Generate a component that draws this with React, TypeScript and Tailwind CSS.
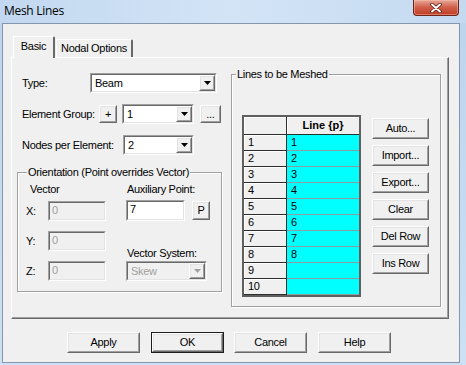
import React from "react";

const sunkenOuter = "border border-t-[#a0a0a0] border-l-[#a0a0a0] border-b-white border-r-white";
const sunkenInner = "border border-t-[#696969] border-l-[#696969] border-b-[#e3e3e3] border-r-[#e3e3e3]";
const raisedOuter = "border border-t-white border-l-white border-b-[#696969] border-r-[#696969]";
const raisedInner = "border border-t-[#e3e3e3] border-l-[#e3e3e3] border-b-[#a0a0a0] border-r-[#a0a0a0]";
const etched = "border border-[#a0a0a0] shadow-[1px_1px_0_#fff,inset_1px_1px_0_#fff]";

function Btn({ className, children, isDefault }: { className: string; children?: React.ReactNode; isDefault?: boolean }) {
  return (
    <div className={`${className} ${isDefault ? "border border-[#1c1c1c]" : ""} shrink-0`}>
      <div className={`${raisedOuter} h-full w-full`}>
        <div className={`${raisedInner} h-full w-full flex items-center justify-center bg-[#f0f0f0] leading-[13px]`}>
          {children}
        </div>
      </div>
    </div>
  );
}

function Arrow({ disabled }: { disabled?: boolean }) {
  return (
    <div className={`${raisedOuter} w-[16px] h-full shrink-0`}>
      <div className={`${raisedInner} h-full flex items-center justify-center bg-[#f0f0f0]`}>
        <svg width="7" height="4" viewBox="0 0 7 4">
          <path d="M0 0h7L3.5 4z" fill={disabled ? "#a0a0a0" : "#000"} />
        </svg>
      </div>
    </div>
  );
}

function Combo({ className, value, disabled }: { className: string; value: string; disabled?: boolean }) {
  return (
    <div className={`${sunkenOuter} ${className} shrink-0`}>
      <div className={`${sunkenInner} h-full flex ${disabled ? "bg-[#f0f0f0]" : "bg-white"}`}>
        <div className={`flex-1 pl-[3px] flex items-center leading-[14px] ${disabled ? "text-[#a0a0a0]" : ""}`}>{value}</div>
        <Arrow disabled={disabled} />
      </div>
    </div>
  );
}

function Edit({ className, value, disabled }: { className: string; value: string; disabled?: boolean }) {
  return (
    <div className={`${sunkenOuter} ${className} shrink-0`}>
      <div className={`${sunkenInner} h-full pl-[2px] pt-[1px] leading-[13px] ${disabled ? "bg-[#f0f0f0] text-[#a0a0a0]" : "bg-white"}`}>
        {value}
      </div>
    </div>
  );
}

export default function App() {
  const rows = [1, 2, 3, 4, 5, 6, 7, 8, 9, 10];
  return (
    <div className="w-[466px] h-[365px] flex flex-col overflow-hidden bg-gradient-to-b from-[#bcd4ed] to-[#cde0f4] font-['Liberation_Sans',Arial,sans-serif] text-[11px] tracking-[-0.3px] text-black">
      {/* Title bar */}
      <div className="h-[23px] flex items-start shrink-0 bg-gradient-to-r from-[#c2d8f0] via-[#d3e4f6] to-[#c4daf1]">
        <span className="ml-[4px] mt-[3px] font-['Open_Sans',sans-serif] text-[12px] leading-[16px] tracking-[-0.3px]">Mesh Lines</span>
        <div className="ml-auto mr-[7px] w-[46px] h-[16px] rounded-b-[4px] border border-t-0 border-[#6e2418] bg-gradient-to-b from-[#e7a798] via-[#cf5d48] to-[#c13c24] flex items-center justify-center shadow-[inset_0_0_0_1px_rgba(255,200,180,0.45)]">
          <svg width="12" height="10" viewBox="0 0 12 10">
            <path d="M2 1.5l8 7M10 1.5l-8 7" stroke="#5a1a10" strokeWidth="3.6" strokeLinecap="round" />
            <path d="M2 1.5l8 7M10 1.5l-8 7" stroke="#fff" strokeWidth="2" strokeLinecap="round" />
          </svg>
        </div>
      </div>

      {/* Client */}
      <div className="ml-[2px] mr-[6px] mb-[2px] flex-1 border border-[#8497ad] bg-[#f0f0f0] flex flex-col">
        {/* Tabs */}
        <div className="ml-[10px] mt-[12px] h-[21px] flex items-end shrink-0">
          <div className="relative z-10 -mb-[1px] w-[42px] h-[22px] bg-[#f0f0f0] border-l border-t border-white border-r-2 border-r-[#696969] rounded-tr-[2px] flex items-start justify-center pt-[3px] leading-[13px]">
            Basic
          </div>
          <div className="ml-[1px] w-[77px] h-[18px] border-l border-t border-white border-r-2 border-r-[#696969] rounded-tr-[2px] flex items-start justify-center pt-[2px] leading-[13px]">
            Nodal Options
          </div>
        </div>

        {/* Tab page */}
        <div className="ml-[8px] w-[438px] h-[262px] shrink-0 border-t border-l border-white border-r border-b border-r-[#696969] border-b-[#696969] shadow-[inset_-1px_-1px_0_#a0a0a0] flex items-start pl-[5px]">
          {/* Left column */}
          <div className="w-[205px] flex flex-col shrink-0">
            <div className="mt-[15px] h-[20px] flex items-center">
              <span className="pl-[5px] w-[73px] shrink-0">Type:</span>
              <Combo className="w-[127px] h-[20px]" value="Beam" />
            </div>
            <div className="mt-[11px] h-[20px] flex items-center">
              <span className="pl-[5px] w-[82px] shrink-0">Element Group:</span>
              <Btn className="w-[18px] h-[18px]">+</Btn>
              <Combo className="ml-[5px] w-[72px] h-[20px]" value="1" />
              <Btn className="ml-[6px] w-[21px] h-[18px]">...</Btn>
            </div>
            <div className="mt-[11px] h-[20px] flex items-center">
              <span className="pl-[5px] w-[106px] shrink-0">Nodes per Element:</span>
              <Combo className="w-[71px] h-[20px]" value="2" />
            </div>

            {/* Orientation group */}
            <div className={`relative mt-[17px] w-[205px] h-[120px] ${etched} flex pl-[8px]`}>
              <span className="absolute left-[9px] top-[-7px] px-[1px] bg-[#f0f0f0] leading-[13px]">
                Orientation (Point overrides Vector)
              </span>
              <div className="w-[80px] flex flex-col pt-[10px]">
                <span className="pl-[4px] leading-[13px] h-[13px]">Vector</span>
                <div className="mt-[5px] h-[20px] flex items-center">
                  <span className="w-[22px] shrink-0">X:</span>
                  <Edit className="w-[58px] h-[20px]" value="0" disabled />
                </div>
                <div className="mt-[10px] h-[20px] flex items-center">
                  <span className="w-[22px] shrink-0">Y:</span>
                  <Edit className="w-[58px] h-[20px]" value="0" disabled />
                </div>
                <div className="mt-[10px] h-[20px] flex items-center">
                  <span className="w-[22px] shrink-0">Z:</span>
                  <Edit className="w-[58px] h-[20px]" value="0" disabled />
                </div>
              </div>
              <div className="ml-[20px] w-[86px] flex flex-col pt-[10px]">
                <span className="pl-[1px] leading-[13px] h-[13px]">Auxiliary Point:</span>
                <div className="mt-[4px] h-[21px] flex items-center">
                  <Edit className="w-[59px] h-[21px]" value="7" />
                  <Btn className="ml-[7px] w-[18px] h-[19px]">P</Btn>
                </div>
                <span className="mt-[26px] pl-[1px] leading-[13px] h-[13px]">Vector System:</span>
                <Combo className="mt-[1px] w-[81px] h-[20px]" value="Skew" disabled />
              </div>
            </div>
          </div>

          {/* Right group */}
          <div className={`relative ml-[9px] mt-[16px] w-[210px] h-[233px] ${etched} flex items-start pl-[10px] pt-[40px]`}>
            <span className="absolute left-[4px] top-[-7px] px-[1px] bg-[#f0f0f0] leading-[13px]">Lines to be Meshed</span>
            <div className="w-[119px] h-[182px] border-2 border-[#5f5f5f] flex flex-col bg-[#f0f0f0] shrink-0">
              <div className="h-[18px] flex border-b border-[#2e2e2e] shrink-0">
                <div className="w-[43px] border-r border-[#2e2e2e] shadow-[inset_1px_1px_0_#fff]" />
                <div className="flex-1 font-bold flex items-center justify-center leading-[13px] tracking-[0px] shadow-[inset_1px_1px_0_#fff]">
                  Line {"{p}"}
                </div>
              </div>
              {rows.map((i) => (
                <div key={i} className="h-[16px] flex shrink-0">
                  <div className="w-[43px] border-r border-b border-[#2e2e2e] pl-[4px] leading-[15px] shadow-[inset_1px_1px_0_#fff]">{i}</div>
                  <div className="flex-1 bg-[#00ffff] border-b border-[#8aa0a0] pl-[4px] leading-[15px]">{i <= 8 ? i : ""}</div>
                </div>
              ))}
            </div>
            <div className="ml-[11px] mt-[3px] flex flex-col gap-[6px]">
              <Btn className="w-[57px] h-[21px]">Auto...</Btn>
              <Btn className="w-[57px] h-[21px]">Import...</Btn>
              <Btn className="w-[57px] h-[21px]">Export...</Btn>
              <Btn className="w-[57px] h-[21px]">Clear</Btn>
              <Btn className="w-[57px] h-[21px]">Del Row</Btn>
              <Btn className="w-[57px] h-[21px]">Ins Row</Btn>
            </div>
          </div>
        </div>

        {/* Bottom buttons */}
        <div className="mt-[13px] ml-[64px] flex">
          <Btn className="w-[73px] h-[21px]">Apply</Btn>
          <Btn className="ml-[11px] w-[73px] h-[21px]" isDefault>OK</Btn>
          <Btn className="ml-[10px] w-[73px] h-[21px]">Cancel</Btn>
          <Btn className="ml-[11px] w-[73px] h-[21px]">Help</Btn>
        </div>
      </div>
    </div>
  );
}
